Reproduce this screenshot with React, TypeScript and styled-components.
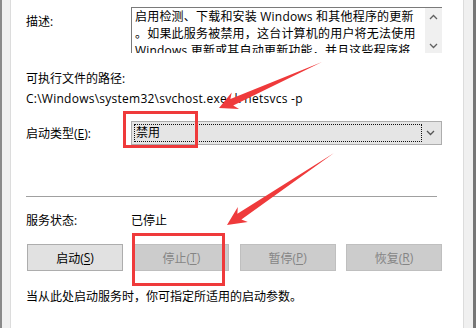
import { FunctionComponent } from 'react'
import styled, { createGlobalStyle } from 'styled-components'

const GlobalStyle = createGlobalStyle`
  html, body {
    margin: 0;
    padding: 0;
    background: #ffffff;
  }
  body {
    width: 476px;
    height: 328px;
    overflow: hidden;
    font-family: "Open Sans", "Noto Sans CJK SC", sans-serif;
    font-size: 12px;
    color: #000000;
  }
`

const Frame = styled.div`
  position: relative;
  box-sizing: border-box;
  width: 476px;
  height: 328px;
  display: flex;
  background: #f0f0f0;
  border-left: 2px solid #8a8a8a;
  border-right: 3px solid #767676;
  padding: 0 9px 0 8px;
  overflow: hidden;
`

const Page = styled.div`
  flex: 1;
  display: flex;
  flex-direction: column;
  background: #ffffff;
  border-left: 1px solid #dcdcdc;
  border-right: 1px solid #dcdcdc;
  padding: 7px 21px 0 15px;
`

const Row = styled.div<{ $top?: number; $align?: string }>`
  display: flex;
  align-items: ${p => p.$align || 'center'};
  margin-top: ${p => p.$top || 0}px;
`

const Label = styled.div<{ $offset?: number }>`
  width: 105px;
  flex: none;
  line-height: 17px;
  white-space: nowrap;
  margin-top: ${p => p.$offset || 0}px;
`

const Text = styled.div<{ $top?: number; $spacing?: number }>`
  line-height: 17px;
  white-space: nowrap;
  margin-top: ${p => p.$top || 0}px;
  letter-spacing: ${p => p.$spacing || 0}px;
`

const Memo = styled.div`
  width: 311px;
  height: 46px;
  box-sizing: border-box;
  display: flex;
  border-top: 1px solid #7a7a7a;
  border-left: 1px solid #7a7a7a;
  overflow: hidden;
`

const MemoText = styled.div`
  flex: 1;
  padding: 0 0 0 3px;
  line-height: 17px;
  letter-spacing: 0.2px;
  white-space: nowrap;
  overflow: hidden;
`

const ScrollBar = styled.div`
  width: 17px;
  flex: none;
  background: #f0f0f0;
  display: flex;
  flex-direction: column;
  align-items: center;
  justify-content: space-between;
  padding: 6px 0 4px;
`

const Combo = styled.div`
  width: 311px;
  height: 24px;
  box-sizing: border-box;
  display: flex;
  align-items: center;
  background: #e5e5e5;
  border: 1px solid #adadad;
  padding: 2px;
`

const FocusBox = styled.div`
  flex: 1;
  height: 18px;
  box-sizing: border-box;
  border: 1px dotted #111111;
  line-height: 16px;
  padding-left: 1px;
`

const ComboArrow = styled.div`
  width: 17px;
  display: flex;
  justify-content: center;
`

const Separator = styled.div`
  height: 1px;
  background: #a0a0a0;
  margin: 51px 5px 0 0;
`

const ButtonBar = styled.div`
  display: flex;
  justify-content: space-between;
  margin: 15px 0 0 1px;
`

const Button = styled.div<{ $disabled?: boolean }>`
  width: 96px;
  height: 27px;
  box-sizing: border-box;
  display: flex;
  align-items: center;
  justify-content: center;
  background: ${p => (p.$disabled ? '#cccccc' : '#e1e1e1')};
  border: 1px solid ${p => (p.$disabled ? '#bfbfbf' : '#adadad')};
  color: ${p => (p.$disabled ? '#858585' : '#000000')};

  u {
    text-underline-offset: 2px;
  }
`

const Overlay = styled.svg`
  position: absolute;
  left: 0;
  top: 0;
  pointer-events: none;
`

const Chevron: FunctionComponent<{ up?: boolean; color?: string }> = ({ up, color = '#606060' }) => (
  <svg width="9" height="6" viewBox="0 0 9 6">
    <path
      d={up ? 'M1 5 L4.5 1.5 L8 5' : 'M1 1 L4.5 4.5 L8 1'}
      fill="none"
      stroke={color}
      strokeWidth="1.3"
    />
  </svg>
)

const Btn: FunctionComponent<{ title: string; keyChar: string; disabled?: boolean }> = ({ title, keyChar, disabled }) => (
  <Button $disabled={disabled}>
    {title}(<u>{keyChar}</u>)
  </Button>
)

const red = '#ef3a3b'

export default function App() {
  return (
    <>
      <GlobalStyle />
      <Frame>
        <Page>
          <Row $align="flex-start">
            <Label $offset={6}>描述:</Label>
            <Memo>
              <MemoText>
                启用检测、下载和安装 Windows 和其他程序的更新<br />
                。如果此服务被禁用，这台计算机的用户将无法使用<br />
                Windows 更新或其自动更新功能，并且这些程序将
              </MemoText>
              <ScrollBar>
                <Chevron up />
                <Chevron />
              </ScrollBar>
            </Memo>
          </Row>
          <Text $top={17}>可执行文件的路径:</Text>
          <Text $top={3} $spacing={0.25}>C:\Windows\system32\svchost.exe -k netsvcs -p</Text>
          <Row $top={14}>
            <Label>启动类型(<u>E</u>):</Label>
            <Combo>
              <FocusBox>禁用</FocusBox>
              <ComboArrow>
                <Chevron color="#555555" />
              </ComboArrow>
            </Combo>
          </Row>
          <Separator />
          <Row $top={15}>
            <Label>服务状态:</Label>
            <Text>已停止</Text>
          </Row>
          <ButtonBar>
            <Btn title="启动" keyChar="S" />
            <Btn title="停止" keyChar="T" disabled />
            <Btn title="暂停" keyChar="P" disabled />
            <Btn title="恢复" keyChar="R" disabled />
          </ButtonBar>
          <Text $top={17}>当从此处启动服务时，你可指定所适用的启动参数。</Text>
        </Page>
        <Overlay width="476" height="328" viewBox="0 0 476 328">
          <rect x="122.5" y="112.5" width="72" height="34" fill="none" stroke={red} strokeWidth="3" />
          <rect x="131.5" y="234.5" width="90" height="50" fill="none" stroke={red} strokeWidth="3" />
          <polygon
            points="320,62 231.2,105.5 237.1,108.9 217,108 229.7,92.5 228.4,99.1"
            fill={red}
          />
          <polygon
            points="332,153 239.4,219.5 245.8,221.9 225,225 235.8,206.9 235.4,213.7"
            fill={red}
          />
        </Overlay>
      </Frame>
    </>
  )
}
